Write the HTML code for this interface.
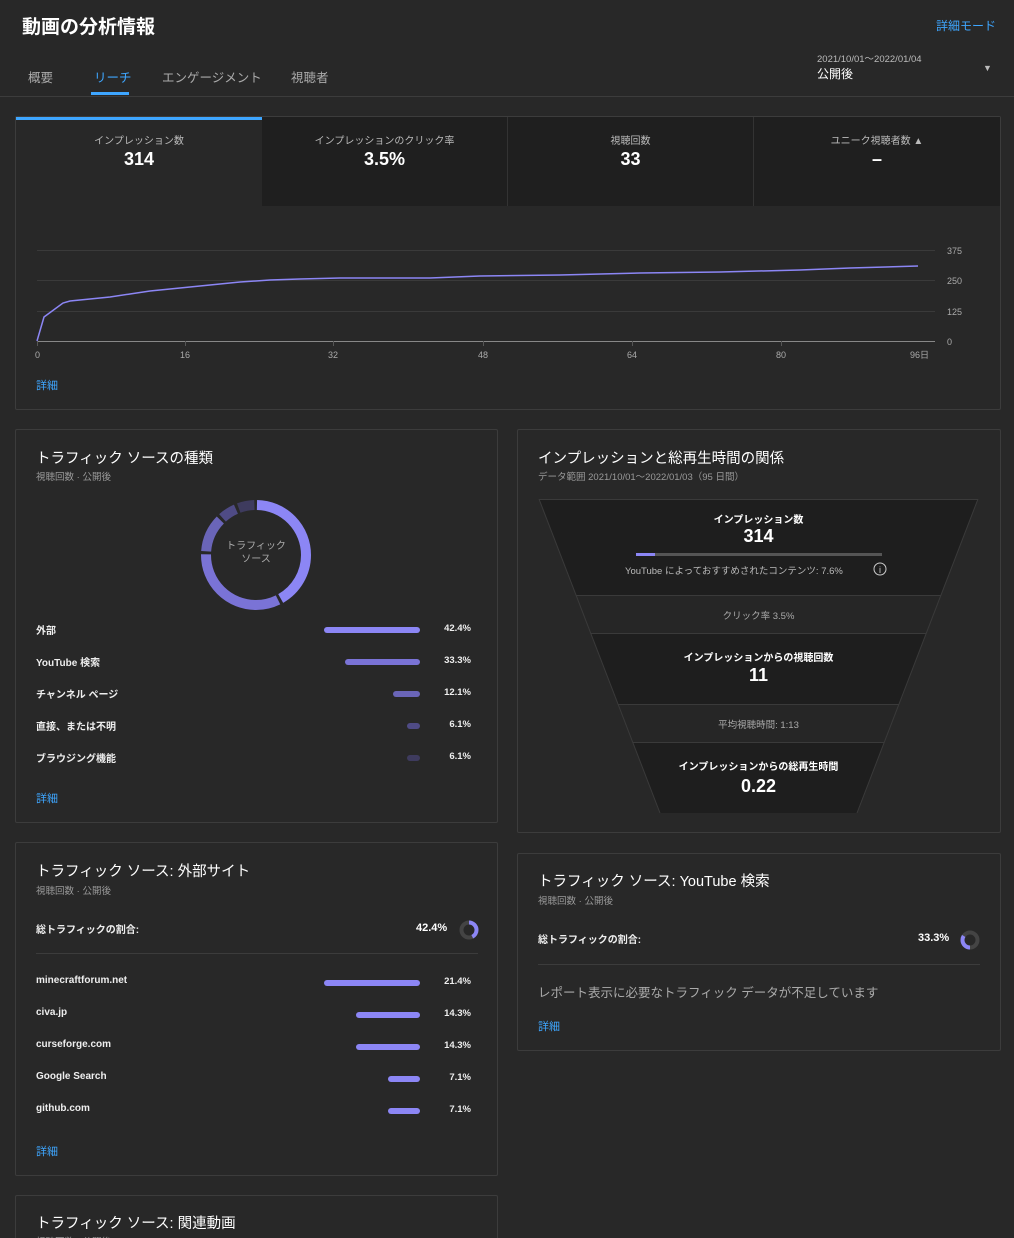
<!DOCTYPE html>
<html><head><meta charset="utf-8"><style>
*{box-sizing:border-box;margin:0;padding:0}
html,body{width:1014px;height:1238px;overflow:hidden}
body{background:#282828;font-family:"Liberation Sans","Noto Sans CJK JP",sans-serif;color:#fff;position:relative}
.a{position:absolute;white-space:nowrap}
.card{position:absolute;border:1px solid #3c3c3c;border-radius:2px;background:#282828}
.h{font-size:14.5px;color:#fff}
.sub{font-size:9.5px;color:#9a9a9a}
.lbl{font-size:10px;color:#eee;font-weight:bold}
.bar{position:absolute;height:6px;border-radius:3px}
.pct{font-size:9.5px;color:#eee;text-align:right;width:50px;font-weight:bold}
.link{font-size:11px;color:#3ea6ff}
</style></head><body>
<div class="a" style="left:22px;top:12px;font-size:19px;font-weight:bold">動画の分析情報</div>
<div class="a link" style="left:936px;top:17px;font-size:12px">詳細モード</div>
<div class="a" style="left:28px;top:67px;font-size:12.5px;color:#aaa">概要</div>
<div class="a" style="left:94px;top:67px;font-size:12.5px;color:#3ea6ff">リーチ</div>
<div class="a" style="left:91px;top:92px;width:38px;height:3px;background:#3ea6ff"></div>
<div class="a" style="left:162px;top:67px;font-size:12.5px;color:#aaa">エンゲージメント</div>
<div class="a" style="left:291px;top:67px;font-size:12.5px;color:#aaa">視聴者</div>
<div class="a" style="left:817px;top:51px;font-size:9.5px;color:#bbb">2021/10/01～2022/01/04</div>
<div class="a" style="left:817px;top:65px;font-size:12px;color:#fff">公開後</div>
<div class="a" style="left:983px;top:63px;font-size:9px;color:#bbb">▼</div>
<div class="a" style="left:0;top:96px;width:1014px;height:1px;background:#3c3c3c"></div>

<div class="card" style="left:15px;top:116px;width:986px;height:294px"></div>
<div class="a" style="left:16px;top:117px;width:246px;height:3px;background:#3ea6ff"></div>
<div class="a" style="left:262px;top:117px;width:738px;height:89px;background:#1f1f1f"></div>
<div class="a" style="left:507px;top:117px;width:1px;height:89px;background:#333"></div>
<div class="a" style="left:753px;top:117px;width:1px;height:89px;background:#333"></div>
<div class="a" style="left:16px;top:132px;width:246px;text-align:center;font-size:10px;color:#bbb">インプレッション数</div>
<div class="a" style="left:16px;top:149px;width:246px;text-align:center;font-size:18px;font-weight:bold">314</div>
<div class="a" style="left:262px;top:132px;width:245px;text-align:center;font-size:10px;color:#bbb">インプレッションのクリック率</div>
<div class="a" style="left:262px;top:149px;width:245px;text-align:center;font-size:18px;font-weight:bold">3.5%</div>
<div class="a" style="left:508px;top:132px;width:245px;text-align:center;font-size:10px;color:#bbb">視聴回数</div>
<div class="a" style="left:508px;top:149px;width:245px;text-align:center;font-size:18px;font-weight:bold">33</div>
<div class="a" style="left:754px;top:132px;width:246px;text-align:center;font-size:10px;color:#bbb">ユニーク視聴者数 ▲</div>
<div class="a" style="left:754px;top:149px;width:246px;text-align:center;font-size:18px;font-weight:bold">–</div>
<svg class="a" style="left:0;top:0" width="1014" height="420">
<g stroke="#3a3a3a" stroke-width="1"><line x1="37" y1="250.5" x2="935" y2="250.5"/><line x1="37" y1="280.5" x2="935" y2="280.5"/><line x1="37" y1="311.5" x2="935" y2="311.5"/></g>
<line x1="37" y1="341.5" x2="935" y2="341.5" stroke="#888"/>
<g stroke="#555"><line x1="37.5" y1="341" x2="37.5" y2="346"/><line x1="185.5" y1="341" x2="185.5" y2="346"/><line x1="333.5" y1="341" x2="333.5" y2="346"/><line x1="483.5" y1="341" x2="483.5" y2="346"/><line x1="632.5" y1="341" x2="632.5" y2="346"/><line x1="781.5" y1="341" x2="781.5" y2="346"/></g>
<polyline fill="none" stroke="#8c86f5" stroke-width="1.5" points="37,341 44,317 63,303 70,301 90,299 110,297 130,294 150,291 170,289 190,287 210,285 240,282 270,280 300,279 340,278 430,278 480,276 560,275 640,273 720,272 800,270 850,268 918,266"/>
<g font-size="9" fill="#aaa" font-family="Liberation Sans,Noto Sans CJK JP,sans-serif"><text x="947" y="254">375</text><text x="947" y="284">250</text><text x="947" y="315">125</text><text x="947" y="345">0</text>
<text x="35" y="358">0</text><text x="180" y="358">16</text><text x="328" y="358">32</text><text x="478" y="358">48</text><text x="627" y="358">64</text><text x="776" y="358">80</text><text x="910" y="358">96日</text></g>
</svg>
<div class="a link" style="left:36px;top:377px">詳細</div>

<div class="card" style="left:15px;top:429px;width:483px;height:394px"></div>
<div class="a h" style="left:36px;top:447px">トラフィック ソースの種類</div>
<div class="a sub" style="left:36px;top:469px">視聴回数 · 公開後</div>
<svg class="a" style="left:196px;top:495px" width="120" height="120">
<g fill="none" stroke-width="10" transform="rotate(-90 60 60)">
<circle cx="60" cy="60" r="50" stroke="#8c86f5" stroke-dasharray="130 400" stroke-dashoffset="-1"/>
<circle cx="60" cy="60" r="50" stroke="#7a73d6" stroke-dasharray="102 400" stroke-dashoffset="-134"/>
<circle cx="60" cy="60" r="50" stroke="#6a65b8" stroke-dasharray="35 400" stroke-dashoffset="-239"/>
<circle cx="60" cy="60" r="50" stroke="#4f4b85" stroke-dasharray="16 400" stroke-dashoffset="-277"/>
<circle cx="60" cy="60" r="50" stroke="#3e3b5e" stroke-dasharray="16 400" stroke-dashoffset="-296"/>
</g></svg>
<div class="a" style="left:226px;top:540px;width:60px;text-align:center;font-size:10px;color:#aaa;white-space:normal;line-height:13px">トラフィックソース</div>
<div class="a lbl" style="left:36px;top:622px">外部</div><div class="bar" style="left:324px;top:627px;width:96px;background:#8c86f5"></div><div class="a pct" style="left:421px;top:623px">42.4%</div>
<div class="a lbl" style="left:36px;top:654px">YouTube 検索</div><div class="bar" style="left:345px;top:659px;width:75px;background:#7a73d6"></div><div class="a pct" style="left:421px;top:655px">33.3%</div>
<div class="a lbl" style="left:36px;top:686px">チャンネル ページ</div><div class="bar" style="left:393px;top:691px;width:27px;background:#6a65b8"></div><div class="a pct" style="left:421px;top:687px">12.1%</div>
<div class="a lbl" style="left:36px;top:718px">直接、または不明</div><div class="bar" style="left:407px;top:723px;width:13px;background:#4f4b85"></div><div class="a pct" style="left:421px;top:719px">6.1%</div>
<div class="a lbl" style="left:36px;top:750px">ブラウジング機能</div><div class="bar" style="left:407px;top:755px;width:13px;background:#3e3b5e"></div><div class="a pct" style="left:421px;top:751px">6.1%</div>
<div class="a link" style="left:36px;top:790px">詳細</div>

<div class="card" style="left:517px;top:429px;width:484px;height:404px"></div>
<div class="a h" style="left:538px;top:447px">インプレッションと総再生時間の関係</div>
<div class="a sub" style="left:538px;top:469px">データ範囲 2021/10/01～2022/01/03（95 日間）</div>
<svg class="a" style="left:0;top:0" width="1014" height="840">
<polygon points="539,499 978,499 941,595 576,595" fill="#1e1e1e"/>
<polygon points="576,596 941,596 926,633 591,633" fill="#262626"/>
<polygon points="591,634 926,634 899,704 618,704" fill="#1e1e1e"/>
<polygon points="618,705 899,705 884,742 633,742" fill="#262626"/>
<polygon points="633,743 884,743 857,813 660,813" fill="#1e1e1e"/>
<g stroke="#3a3a3a"><line x1="576" y1="595.5" x2="941" y2="595.5"/><line x1="591" y1="633.5" x2="926" y2="633.5"/><line x1="618" y1="704.5" x2="899" y2="704.5"/><line x1="633" y1="742.5" x2="884" y2="742.5"/></g>
<polyline points="539,499 660,813" stroke="#3a3a3a" fill="none"/><polyline points="978,499 857,813" stroke="#3a3a3a" fill="none"/>
<line x1="539" y1="499.5" x2="978" y2="499.5" stroke="#3a3a3a"/>
<rect x="636" y="553" width="246" height="3" fill="#555"/><rect x="636" y="553" width="19" height="3" fill="#8c86f5"/>
<circle cx="880" cy="569" r="6" fill="none" stroke="#ccc" stroke-width="1"/><text x="880" y="573" font-size="9" fill="#ccc" text-anchor="middle" font-family="Liberation Sans">i</text>
</svg>
<div class="a" style="left:539px;top:511px;width:439px;text-align:center;font-size:10px;font-weight:bold">インプレッション数</div>
<div class="a" style="left:539px;top:526px;width:439px;text-align:center;font-size:18px;font-weight:bold">314</div>
<div class="a" style="left:625px;top:563px;font-size:9.5px;color:#bbb">YouTube によっておすすめされたコンテンツ: 7.6%</div>
<div class="a" style="left:539px;top:608px;width:439px;text-align:center;font-size:9.5px;color:#aaa">クリック率 3.5%</div>
<div class="a" style="left:539px;top:649px;width:439px;text-align:center;font-size:10px;font-weight:bold">インプレッションからの視聴回数</div>
<div class="a" style="left:539px;top:665px;width:439px;text-align:center;font-size:18px;font-weight:bold">11</div>
<div class="a" style="left:539px;top:717px;width:439px;text-align:center;font-size:9.5px;color:#aaa">平均視聴時間: 1:13</div>
<div class="a" style="left:539px;top:758px;width:439px;text-align:center;font-size:10px;font-weight:bold">インプレッションからの総再生時間</div>
<div class="a" style="left:539px;top:776px;width:439px;text-align:center;font-size:18px;font-weight:bold">0.22</div>

<div class="card" style="left:15px;top:842px;width:483px;height:334px"></div>
<div class="a h" style="left:36px;top:860px">トラフィック ソース: 外部サイト</div>
<div class="a sub" style="left:36px;top:883px">視聴回数 · 公開後</div>
<div class="a lbl" style="left:36px;top:921px">総トラフィックの割合:</div>
<div class="a" style="left:416px;top:922px;font-size:11px;font-weight:bold">42.4%</div>
<svg class="a" style="left:458px;top:919px" width="22" height="22"><circle cx="11" cy="11" r="7.5" fill="none" stroke="#444" stroke-width="4"/><circle cx="11" cy="11" r="7.5" fill="none" stroke="#8c86f5" stroke-width="4" stroke-dasharray="20 60" transform="rotate(-90 11 11)"/></svg>
<div class="a" style="left:36px;top:953px;width:442px;height:1px;background:#3c3c3c"></div>
<div class="a lbl" style="left:36px;top:975px">minecraftforum.net</div><div class="bar" style="left:324px;top:980px;width:96px;background:#8c86f5"></div><div class="a pct" style="left:421px;top:976px">21.4%</div>
<div class="a lbl" style="left:36px;top:1007px">civa.jp</div><div class="bar" style="left:356px;top:1012px;width:64px;background:#8c86f5"></div><div class="a pct" style="left:421px;top:1008px">14.3%</div>
<div class="a lbl" style="left:36px;top:1039px">curseforge.com</div><div class="bar" style="left:356px;top:1044px;width:64px;background:#8c86f5"></div><div class="a pct" style="left:421px;top:1040px">14.3%</div>
<div class="a lbl" style="left:36px;top:1071px">Google Search</div><div class="bar" style="left:388px;top:1076px;width:32px;background:#8c86f5"></div><div class="a pct" style="left:421px;top:1072px">7.1%</div>
<div class="a lbl" style="left:36px;top:1103px">github.com</div><div class="bar" style="left:388px;top:1108px;width:32px;background:#8c86f5"></div><div class="a pct" style="left:421px;top:1104px">7.1%</div>
<div class="a link" style="left:36px;top:1143px">詳細</div>

<div class="card" style="left:517px;top:853px;width:484px;height:198px"></div>
<div class="a h" style="left:538px;top:870px">トラフィック ソース: YouTube 検索</div>
<div class="a sub" style="left:538px;top:893px">視聴回数 · 公開後</div>
<div class="a lbl" style="left:538px;top:931px">総トラフィックの割合:</div>
<div class="a" style="left:918px;top:932px;font-size:11px;font-weight:bold">33.3%</div>
<svg class="a" style="left:959px;top:929px" width="22" height="22"><circle cx="11" cy="11" r="7.5" fill="none" stroke="#444" stroke-width="4"/><circle cx="11" cy="11" r="7.5" fill="none" stroke="#8c86f5" stroke-width="4" stroke-dasharray="16 60" transform="rotate(90 11 11)"/></svg>
<div class="a" style="left:538px;top:964px;width:442px;height:1px;background:#3c3c3c"></div>
<div class="a" style="left:538px;top:982px;font-size:12.5px;color:#aaa">レポート表示に必要なトラフィック データが不足しています</div>
<div class="a link" style="left:538px;top:1018px">詳細</div>

<div class="card" style="left:15px;top:1195px;width:483px;height:80px"></div>
<div class="a h" style="left:36px;top:1212px">トラフィック ソース: 関連動画</div>
<div class="a sub" style="left:36px;top:1234px">視聴回数 · 公開後</div>
</body></html>
